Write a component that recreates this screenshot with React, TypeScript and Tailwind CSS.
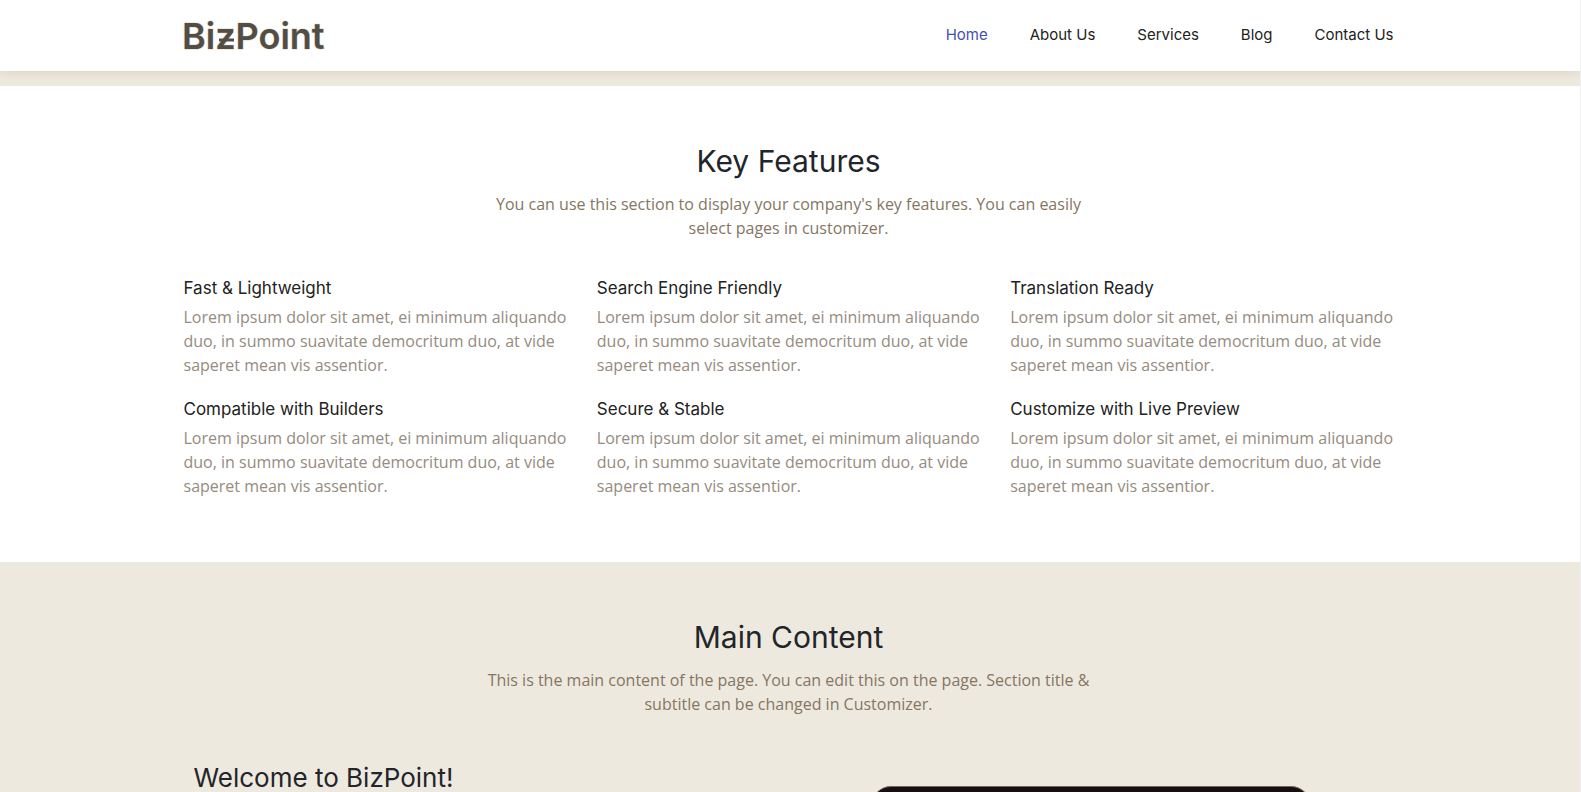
const menu = [
  { label: 'Home', href: '#home' },
  { label: 'About Us', href: '#about' },
  { label: 'Services', href: '#services' },
  { label: 'Blog', href: '#blog' },
  { label: 'Contact Us', href: '#contact' },
];

const lorem =
  'Lorem ipsum dolor sit amet, ei minimum aliquando duo, in summo suavitate democritum duo, at vide saperet mean vis assentior.';

const features = [
  'Fast & Lightweight',
  'Search Engine Friendly',
  'Translation Ready',
  'Compatible with Builders',
  'Secure & Stable',
  'Customize with Live Preview',
];

function Logo() {
  return (
    <svg width="142" height="34" viewBox="0 0 142 34" className="block overflow-visible" role="img" aria-label="BizPoint">
      <text
        x="-2"
        y="30"
        fill="#524e46"
        stroke="#e6d8c6"
        strokeWidth="1"
        paintOrder="stroke"
        className="font-['Inter',sans-serif] text-[36px] font-semibold"
      >
        BizPoint
      </text>
      <path d="M35 21h15" stroke="#524e46" strokeWidth="3" />
    </svg>
  );
}

function SectionHeading({ title, subtitle }: { title: string; subtitle: string }) {
  return (
    <div className="mx-auto max-w-[620px] text-center">
      <h2 className="font-['Inter',sans-serif] text-[30px] leading-[34px] text-[#222529]">{title}</h2>
      <p className="mt-3.5 text-base leading-6 text-[#857663]">{subtitle}</p>
    </div>
  );
}

export default function App() {
  return (
    <div className="h-screen overflow-hidden border-r border-[#f0f0f0] bg-[#eee9df] font-['Open_Sans',sans-serif]">
      <header className="relative bg-white pr-[3px] shadow-[0_0_12px_rgba(120,90,50,0.2)]">
        <div className="mx-auto flex h-[71px] max-w-[1240px] items-center justify-between px-[15px]">
          <a href="#home">
            <Logo />
          </a>
          <nav className="flex gap-[42px] pb-0.5 font-['Inter',sans-serif] text-[15px] leading-6">
            {menu.map((item, i) => (
              <a key={item.label} href={item.href} className={i === 0 ? 'text-[#3f51b5]' : 'text-[#222222]'}>
                {item.label}
              </a>
            ))}
          </nav>
        </div>
      </header>

      <section className="mt-[15px] bg-white pt-[58px] pr-[3px] pb-16">
        <div className="mx-auto max-w-[1240px] px-[15px]">
          <SectionHeading
            title="Key Features"
            subtitle="You can use this section to display your company's key features. You can easily select pages in customizer."
          />
          <div className="mt-9 grid grid-cols-3 gap-x-[30px] gap-y-5">
            {features.map((title) => (
              <article key={title}>
                <h3 className="font-['Inter',sans-serif] text-[17px] leading-6 text-[#222222]">{title}</h3>
                <p className="mt-[5px] -mr-2 text-base leading-6 text-[#958b80]">{lorem}</p>
              </article>
            ))}
          </div>
        </div>
      </section>

      <section className="pt-[58px] pr-[3px]">
        <div className="mx-auto max-w-[1240px] px-[15px]">
          <SectionHeading
            title="Main Content"
            subtitle="This is the main content of the page. You can edit this on the page. Section title & subtitle can be changed in Customizer."
          />
          <div className="mt-[46px] grid grid-cols-2 px-[10px]">
            <h3 className="font-['Inter',sans-serif] text-[26px] leading-8 text-[#222529]">Welcome to BizPoint!</h3>
            <div className="mt-6 ml-[82px] h-[280px] w-[440px] rounded-[20px] border border-[#6f6661] bg-[#15100f]" />
          </div>
        </div>
      </section>
    </div>
  );
}
